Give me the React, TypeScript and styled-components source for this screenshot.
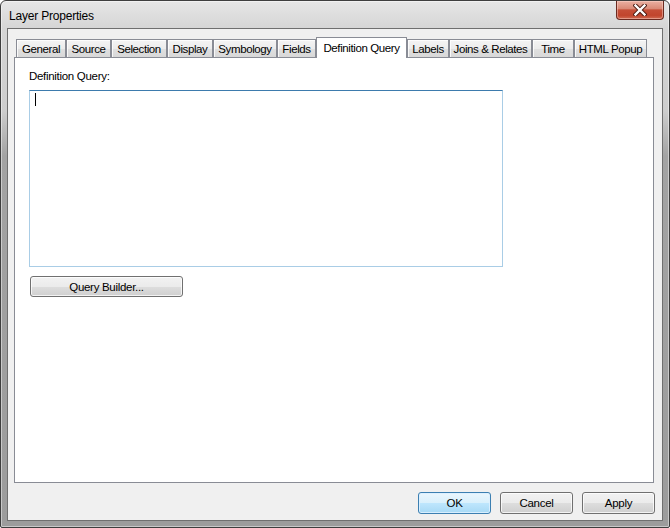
import React from "react";
import styled, { createGlobalStyle } from "styled-components";

const GlobalStyle = createGlobalStyle`
  html, body { margin: 0; padding: 0; background: #ffffff; }
  * { box-sizing: border-box; }
`;

const Window = styled.div`
  width: 670px;
  height: 528px;
  border: 1px solid #3e3e3e;
  border-radius: 6px 6px 2px 2px;
  background: linear-gradient(180deg, #e6e6e6 0px, #d5d5d5 28px, #cdcdcd 110px, #a3a3a3 155px, #9c9c9c 100%);
  box-shadow: inset 0 0 0 1px rgba(255, 255, 255, 0.45);
  display: flex;
  flex-direction: column;
  font-family: "Liberation Sans", Arial, sans-serif;
  color: #000;
  overflow: hidden;
`;

const TitleBar = styled.div`
  height: 27px;
  display: flex;
  align-items: flex-start;
  flex: none;
`;

const Title = styled.div`
  margin: 8px 0 0 8px;
  font-size: 12px;
  line-height: 15px;
  letter-spacing: -0.2px;
  color: #000;
`;

const CloseButton = styled.div`
  margin-left: auto;
  margin-right: 5px;
  width: 48px;
  height: 19px;
  border: 1px solid #6b2a20;
  border-top: none;
  border-radius: 0 0 4px 4px;
  background: linear-gradient(180deg, #eab0a2 0%, #d98a77 42%, #c54e37 50%, #c1452d 80%, #d06a52 100%);
  box-shadow: inset 0 0 0 1px rgba(255, 220, 210, 0.45);
  display: flex;
  align-items: center;
  justify-content: center;
`;

const Client = styled.div`
  flex: 1;
  margin: 0 6px 6px 6px;
  border: 1px solid #6f6f6f;
  background: #f0f0f0;
  display: flex;
  flex-direction: column;
`;

const TabRow = styled.div`
  display: flex;
  align-items: flex-end;
  height: 28px;
  padding-left: 8px;
  flex: none;
`;

const Tab = styled.div<{ $w: number; $active?: boolean }>`
  width: ${(p) => p.$w}px;
  height: ${(p) => (p.$active ? 21 : 18)}px;
  margin-bottom: ${(p) => (p.$active ? -1 : 0)}px;
  position: relative;
  z-index: ${(p) => (p.$active ? 2 : 1)};
  border: 1px solid #898c95;
  border-bottom: none;
  background: ${(p) =>
    p.$active
      ? "#ffffff"
      : "linear-gradient(180deg, #f4f4f4 0%, #ececec 50%, #e0e0e0 51%, #d8d8d8 100%)"};
  box-shadow: ${(p) => (p.$active ? "none" : "inset 1px 1px 0 rgba(255,255,255,0.8)")};
  display: flex;
  justify-content: center;
  padding-top: ${(p) => (p.$active ? 3 : 2)}px;
  font-size: 11.5px;
  line-height: 14px;
  letter-spacing: -0.4px;
  white-space: nowrap;
`;

const Panel = styled.div`
  height: 426px;
  margin: 0 8px 0 6px;
  border: 1px solid #898c95;
  background: #ffffff;
  padding: 11px 14px;
  display: flex;
  flex-direction: column;
  align-items: flex-start;
  flex: none;
`;

const FieldLabel = styled.div`
  font-size: 11.5px;
  line-height: 14px;
  letter-spacing: -0.3px;
`;

const TextBox = styled.div`
  margin-top: 7px;
  width: 474px;
  height: 177px;
  border: 1px solid #a9cde6;
  border-top-color: #3d7bad;
  background: #fff;
  padding: 2px 0 0 5px;
`;

const Caret = styled.div`
  width: 1px;
  height: 13px;
  background: #000;
`;

const Button = styled.div<{ $w: number; $primary?: boolean }>`
  width: ${(p) => p.$w}px;
  height: 22px;
  border: 1px solid ${(p) => (p.$primary ? "#3c7fb1" : "#707070")};
  border-radius: 3px;
  background: ${(p) =>
    p.$primary
      ? "linear-gradient(180deg, #eaf6fd 0%, #d9f0fc 50%, #bee6fd 51%, #a7d9f5 100%)"
      : "linear-gradient(180deg, #f2f2f2 0%, #ebebeb 50%, #dddddd 51%, #cfcfcf 100%)"};
  box-shadow: inset 0 0 0 1px ${(p) => (p.$primary ? "rgba(220,240,255,0.9)" : "rgba(255,255,255,0.75)")};
  display: flex;
  align-items: center;
  justify-content: center;
  font-size: 11.5px;
  letter-spacing: -0.3px;
  color: #000;
`;

const QueryButton = styled(Button)`
  margin: 9px 0 0 1px;
  height: 21px;
`;

const Footer = styled.div`
  display: flex;
  justify-content: flex-end;
  gap: 9px;
  padding: 9px 7px 0 0;
`;

const tabs: { label: string; w: number; active?: boolean }[] = [
  { label: "General", w: 50 },
  { label: "Source", w: 45 },
  { label: "Selection", w: 56 },
  { label: "Display", w: 46 },
  { label: "Symbology", w: 64 },
  { label: "Fields", w: 39 },
  { label: "Definition Query", w: 91, active: true },
  { label: "Labels", w: 42 },
  { label: "Joins & Relates", w: 83 },
  { label: "Time", w: 42 },
  { label: "HTML Popup", w: 73 },
];

export default function App() {
  return (
    <>
      <GlobalStyle />
      <Window>
        <TitleBar>
          <Title>Layer Properties</Title>
          <CloseButton>
            <svg width="14" height="12" viewBox="0 0 14 12">
              <path d="M2.5 1.5 L11.5 10.5 M11.5 1.5 L2.5 10.5" stroke="#4a1a12" strokeWidth="4.2" strokeLinecap="square" />
              <path d="M2.5 1.5 L11.5 10.5 M11.5 1.5 L2.5 10.5" stroke="#ffffff" strokeWidth="2.4" strokeLinecap="square" />
            </svg>
          </CloseButton>
        </TitleBar>
        <Client>
          <TabRow>
            {tabs.map((t) => (
              <Tab key={t.label} $w={t.w} $active={t.active}>
                {t.label}
              </Tab>
            ))}
          </TabRow>
          <Panel>
            <FieldLabel>Definition Query:</FieldLabel>
            <TextBox>
              <Caret />
            </TextBox>
            <QueryButton $w={153}>Query Builder...</QueryButton>
          </Panel>
          <Footer>
            <Button $w={73} $primary>OK</Button>
            <Button $w={73}>Cancel</Button>
            <Button $w={73}>Apply</Button>
          </Footer>
        </Client>
      </Window>
    </>
  );
}
